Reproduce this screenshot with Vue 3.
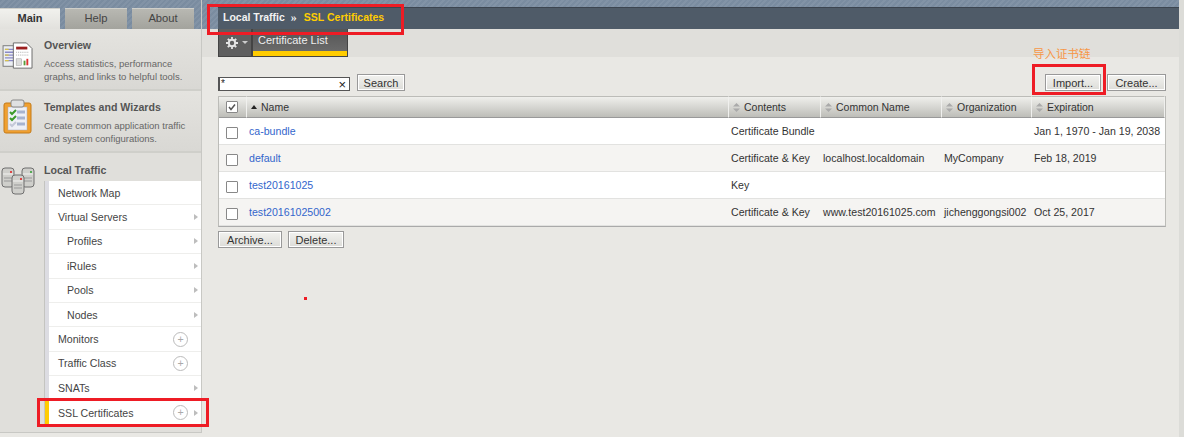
<template>
  <div class="page">
    <aside class="sidebar">
      <div class="tabs">
        <div v-for="t in tabs" :key="t" class="tab" :class="{ active: t === 'Main' }">{{ t }}</div>
      </div>

      <section class="side-block">
        <svg class="side-icon overview-icon" viewBox="0 0 34 30" width="32" height="28">
          <rect x="1" y="4" width="16" height="22" fill="#eceff3" stroke="#777" />
          <path d="M3 8h12M3 11h12M3 14h12M3 17h12M3 20h12" stroke="#8a8ac8" stroke-width="1.4" />
          <path d="M3 8h4M3 14h4M3 20h4" stroke="#d6c24a" stroke-width="1.4" />
          <path d="M12 1h14l6 6v21H12z" fill="#fff" stroke="#666" />
          <rect x="15" y="5" width="12" height="3" fill="#9c2020" />
          <path d="M15 11h14M15 14h14" stroke="#aaa" stroke-dasharray="1 1" />
          <rect x="15" y="18" width="6" height="7" fill="#ddd" stroke="#999" stroke-width=".5" />
          <rect x="23" y="20" width="2" height="5" fill="#5a9c3a" />
          <rect x="26" y="18" width="2" height="7" fill="#d33" />
        </svg>
        <div>
          <h3>Overview</h3>
          <p>Access statistics, performance graphs, and links to helpful tools.</p>
        </div>
      </section>

      <section class="side-block">
        <svg class="side-icon wizard-icon" viewBox="0 0 30 36" width="30" height="36">
          <rect x="1" y="4" width="27" height="30" rx="2" fill="#f0a030" stroke="#c47a18" />
          <rect x="5" y="8" width="19" height="23" fill="#eef0f6" stroke="#aab" stroke-width=".5" />
          <rect x="8" y="1" width="13" height="7" rx="2" fill="#dfe0e2" stroke="#888" />
          <path d="M7 13l2 2 4-4M7 19l2 2 4-4" fill="none" stroke="#3a9a2a" stroke-width="2" />
          <path d="M7 25l2 2 4-4" fill="none" stroke="#c4c8d8" stroke-width="2" />
          <path d="M14 13h8M14 19h8M14 25h8" stroke="#a8b4d0" stroke-width="3" />
        </svg>
        <div>
          <h3>Templates and Wizards</h3>
          <p>Create common application traffic and system configurations.</p>
        </div>
      </section>

      <section class="traffic">
        <svg class="side-icon traffic-icon" viewBox="0 0 34 28" width="34" height="28">
          <g v-for="s in servers" :key="s.x" fill="#cfcfcb" stroke="#6f6f6f">
            <rect :x="s.x" :y="s.y" width="12" height="19" rx="3" />
            <path :d="`M${s.x + 1} ${s.y + 6}h10`" stroke="#f2f2f0" fill="none" />
            <path :d="`M${s.x + 2} ${s.y + 10}h8M${s.x + 2} ${s.y + 13}h8`" stroke="#999" fill="none" />
            <rect :x="s.x + 8" :y="s.y + 3" width="2" height="2" :fill="s.led" stroke="none" />
          </g>
        </svg>
        <h3>Local Traffic</h3>
        <ul class="nav">
          <li v-for="item in nav" :key="item.label" :class="{ sub: item.sub, current: item.current }">
            <span class="nav-label">{{ item.label }}</span>
            <span v-if="item.plus" class="plus">+</span>
            <span v-if="item.arrow" class="arrow"></span>
          </li>
        </ul>
      </section>
    </aside>

    <main class="main">
      <div class="top-band">
        <div class="crumbs">
          <span>Local Traffic</span>
          <span class="sep">»</span>
          <span class="crumb-current">SSL Certificates</span>
        </div>
      </div>

      <div class="toolbar">
        <div class="gear-box">
          <svg viewBox="0 0 12 12" width="12" height="12">
            <circle cx="6" cy="6" r="3.2" fill="none" stroke="#e4e4e4" stroke-width="2" />
            <path d="M6 0v2.4M6 9.6V12M0 6h2.4M9.6 6H12M1.8 1.8l1.7 1.7M8.5 8.5l1.7 1.7M10.2 1.8L8.5 3.5M3.5 8.5l-1.7 1.7" stroke="#e4e4e4" stroke-width="1.8" />
          </svg>
          <span class="caret"></span>
        </div>
        <div class="list-tab">Certificate List</div>
      </div>

      <div class="content">
        <div class="action-row">
          <div class="search-box">
            <span class="search-value">*</span>
            <span class="clear">×</span>
          </div>
          <button class="btn search-btn">Search</button>
          <div class="spacer"></div>
          <button class="btn import-btn">Import...</button>
          <button class="btn create-btn">Create...</button>
        </div>

        <table class="cert-table">
          <colgroup>
            <col class="c-check" /><col class="c-name" /><col class="c-contents" />
            <col class="c-common" /><col class="c-org" /><col class="c-exp" />
          </colgroup>
          <thead>
            <tr>
              <th><span class="box head-box"><svg viewBox="0 0 10 10" width="10" height="10"><path d="M2 5l2 2.5L8 2.5" fill="none" stroke="#555" stroke-width="1.5" /></svg></span></th>
              <th><span class="sort-up"></span>Name</th>
              <th v-for="h in sortable" :key="h">
                <svg class="sort-both" viewBox="0 0 7 9" width="7" height="9"><path d="M3.5 0L7 3.5H0zM3.5 9L0 5.5h7z" fill="#aaa" /></svg>{{ h }}
              </th>
            </tr>
          </thead>
          <tbody>
            <tr v-for="r in rows" :key="r.name">
              <td><span class="box"></span></td>
              <td class="link">{{ r.name }}</td>
              <td>{{ r.contents }}</td>
              <td>{{ r.common }}</td>
              <td>{{ r.org }}</td>
              <td>{{ r.exp }}</td>
            </tr>
          </tbody>
        </table>

        <div class="bottom-row">
          <button class="btn archive-btn">Archive...</button>
          <button class="btn delete-btn">Delete...</button>
        </div>
      </div>
    </main>
    <div class="edge"></div>

    <!-- annotations drawn over the screenshot -->
    <div class="mark mark-crumb"></div>
    <div class="mark mark-import"></div>
    <div class="mark mark-ssl"></div>
    <div class="note">导入证书链</div>
    <div class="dot"></div>
  </div>
</template>

<script setup>
const tabs = ['Main', 'Help', 'About']

const servers = [
  { x: 1, y: 1, led: '#d44' },
  { x: 21, y: 1, led: '#5a5' },
  { x: 11, y: 8, led: '#d44' }
]

const nav = [
  { label: 'Network Map' },
  { label: 'Virtual Servers', arrow: true },
  { label: 'Profiles', sub: true, arrow: true },
  { label: 'iRules', sub: true, arrow: true },
  { label: 'Pools', sub: true, arrow: true },
  { label: 'Nodes', sub: true, arrow: true },
  { label: 'Monitors', plus: true },
  { label: 'Traffic Class', plus: true },
  { label: 'SNATs', arrow: true },
  { label: 'SSL Certificates', plus: true, arrow: true, current: true }
]

const sortable = ['Contents', 'Common Name', 'Organization', 'Expiration']

const rows = [
  { name: 'ca-bundle', contents: 'Certificate Bundle', common: '', org: '', exp: 'Jan 1, 1970 - Jan 19, 2038' },
  { name: 'default', contents: 'Certificate & Key', common: 'localhost.localdomain', org: 'MyCompany', exp: 'Feb 18, 2019' },
  { name: 'test20161025', contents: 'Key', common: '', org: '', exp: '' },
  { name: 'test20161025002', contents: 'Certificate & Key', common: 'www.test20161025.com', org: 'jichenggongsi002', exp: 'Oct 25, 2017' }
]
</script>

<style>
html, body {
  margin: 0;
  background: #e9e8e4;
  overflow: hidden;
}
</style>

<style scoped>
.page {
  position: relative;
  display: flex;
  width: 1184px;
  height: 437px;
  overflow: hidden;
  font-family: "Liberation Sans", Arial, sans-serif;
  font-size: 11px;
  color: #333;
  background: #e9e8e4;
}

.sidebar {
  width: 201px;
  height: 432px;
  flex: none;
  background: #e0dfdb;
  border-right: 1px solid #c8c8c4;
  border-bottom: 1px solid #c8c8c4;
}

.tabs {
  display: flex;
  gap: 5px;
  height: 21px;
  padding-top: 8px;
  background: repeating-linear-gradient(135deg, #7a8ca0 0 2px, #8293a6 2px 4px);
}

.tab {
  width: 62px;
  text-align: center;
  line-height: 20px;
  font-size: 11.2px;
  color: #444;
  background: linear-gradient(#b9b9b3, #a3a39d);
  box-shadow: inset 0 1px 0 #cfcfca;
}

.tab.active {
  width: 60px;
  font-size: 11px;
  font-weight: bold;
  color: #333;
  background: linear-gradient(#f2f2ee, #e2e1dd);
}

.side-block {
  display: flex;
  gap: 10px;
  height: 62px;
  box-sizing: border-box;
  padding: 10px 0 0 2px;
  border-bottom: 2px solid #cfcfca;
  background: linear-gradient(#e4e3df, #d9d8d4);
}

.side-block h3,
.traffic h3 {
  margin: 0;
  font-size: 10.6px;
  color: #555;
}

.side-block p {
  margin: 6px 0 0;
  width: 150px;
  line-height: 13px;
  font-size: 9.5px;
  color: #666;
}

.side-icon {
  flex: none;
}

.overview-icon {
  margin-top: 3px;
}

.wizard-icon {
  width: 30px;
  margin: -2px 1px 0 1px;
}

.traffic {
  position: relative;
  height: 279px;
  padding: 11px 0 0 44px;
  box-sizing: border-box;
}

.traffic-icon {
  position: absolute;
  left: 1px;
  top: 14px;
}

.nav {
  list-style: none;
  margin: 5px 0 0 1px;
  padding: 0;
  background: #fff;
  border-left: 4px solid #dcdce2;
  box-shadow: -1px 0 0 #c4c4c0;
}

.nav li {
  display: flex;
  align-items: center;
  height: 24.4px;
  box-sizing: border-box;
  padding-left: 9px;
  border-bottom: 1px solid #eeeeec;
  font-size: 10.6px;
  color: #444;
}

.nav li.sub {
  padding-left: 18px;
}

.nav li.current {
  border-bottom: 0;
  border-left: 4px solid #ffcc00;
  margin-left: -4px;
}

.nav-label {
  flex: 1;
}

.plus {
  width: 13px;
  height: 13px;
  margin-right: 13px;
  border: 1px solid #bbb;
  border-radius: 50%;
  line-height: 12px;
  text-align: center;
  color: #aaa;
}

.plus + .arrow {
  margin-left: -7px;
}

.arrow {
  width: 0;
  height: 0;
  margin-right: 3px;
  border-left: 4px solid #bdbdbd;
  border-top: 3.5px solid transparent;
  border-bottom: 3.5px solid transparent;
}

.main {
  flex: none;
  width: 977px;
}

.top-band {
  height: 22px;
  padding: 7px 0 0 16px;
  background: repeating-linear-gradient(135deg, #7a8ca0 0 2px, #8293a6 2px 4px);
}

.crumbs {
  display: flex;
  align-items: center;
  height: 18px;
  padding: 0 0 3px 5px;
  border-top: 1px solid #3c4550;
  background: #4f5b68;
  font-size: 10.5px;
  font-weight: bold;
  color: #f2f2f2;
}

.sep {
  margin: 0 7px 0 6px;
  font-size: 12px;
  font-family: "Liberation Serif", serif;
}

.crumb-current {
  color: #ffcc00;
}

.toolbar {
  display: flex;
  height: 28px;
  padding-left: 16px;
  background: #e0dfdb;
}

.gear-box {
  display: flex;
  align-items: center;
  gap: 4px;
  width: 34px;
  box-sizing: border-box;
  padding-left: 7px;
  background: #5f5f5f;
  border: 1px solid #444;
  border-top: 0;
}

.caret {
  border-top: 3px solid #ccc;
  border-left: 3px solid transparent;
  border-right: 3px solid transparent;
}

.list-tab {
  width: 96px;
  box-sizing: border-box;
  padding: 5px 0 0 5px;
  border: 1px solid #444;
  border-top: 0;
  background: linear-gradient(#555 0, #6a6a6a 22px, #ffcc00 22px, #ffcc00 26px);
  color: #eee;
  font-size: 11px;
}

.content {
  padding: 18px 13px 0 16px;
}

.action-row {
  display: flex;
  align-items: flex-end;
  height: 16px;
}

.search-box {
  display: flex;
  justify-content: space-between;
  width: 132px;
  height: 14px;
  box-sizing: border-box;
  padding: 0 3px 0 1px;
  background: #fff;
  border: 1px solid #555;
  border-left-width: 2px;
  line-height: 11px;
  font-size: 10px;
  color: #222;
}

.clear {
  font-size: 13px;
  line-height: 13px;
}

.btn {
  height: 17px;
  box-sizing: border-box;
  padding: 0;
  font-family: inherit;
  font-size: 11px;
  line-height: 12px;
  color: #333;
  background: linear-gradient(#f2f2ef, #dcdcd8);
  border: 1px solid #999;
  box-shadow: inset 0 0 0 1px #fff;
}

.search-btn {
  width: 48px;
  margin-left: 7px;
}

.spacer {
  flex: 1;
}

.import-btn {
  width: 56px;
}

.create-btn {
  width: 59px;
  margin-left: 6px;
}

.cert-table {
  width: 948px;
  margin-top: 5px;
  table-layout: fixed;
  border-collapse: separate;
  border-spacing: 0;
  border-right: 1px solid #bcbcb8;
  border-left: 1px solid #bcbcb8;
  border-bottom: 1px solid #aaa;
}

.c-check { width: 28px; }
.c-name { width: 482px; }
.c-contents { width: 92px; }
.c-common { width: 121px; }
.c-org { width: 90px; }

.cert-table th {
  height: 22px;
  box-sizing: border-box;
  padding: 0 0 0 4px;
  text-align: left;
  font-weight: normal;
  font-size: 10.5px;
  color: #333;
  background: linear-gradient(#efefec, #bdbdb8);
  border-top: 1px solid #bcbcb8;
  border-right: 1px solid #f0f0ee;
  border-bottom: 1px solid #999;
}

.cert-table td {
  height: 27px;
  box-sizing: border-box;
  padding: 0 0 1px 2px;
  font-size: 10.6px;
  color: #333;
  background: #fff;
  border-bottom: 1px solid #e2e2e0;
  white-space: nowrap;
}

.cert-table tbody tr:nth-child(even) td {
  background: #f5f4f2;
}

.cert-table td:first-child {
  padding: 3px 0 0 7px;
}

.cert-table td.link {
  color: #3366cc;
}

.box {
  display: block;
  width: 12px;
  height: 12px;
  box-sizing: border-box;
  background: #fff;
  border: 1px solid #888;
  border-radius: 1px;
}

.head-box {
  display: flex;
  align-items: center;
  justify-content: center;
  margin-left: 3px;
}

.sort-up {
  display: inline-block;
  margin: 0 4px 2px 0;
  border-bottom: 4px solid #222;
  border-left: 3.5px solid transparent;
  border-right: 3.5px solid transparent;
}

.sort-both {
  margin-right: 4px;
  vertical-align: -1px;
}

.bottom-row {
  display: flex;
  gap: 6px;
  margin-top: 4px;
}

.archive-btn {
  width: 64px;
}

.delete-btn {
  width: 56px;
}

.edge {
  flex: 1;
  background: #dcdcd8;
}

.mark {
  position: absolute;
  box-sizing: border-box;
  border: 3px solid #ee1c25;
}

.mark-crumb {
  left: 207px;
  top: 4px;
  width: 197px;
  height: 31px;
}

.mark-import {
  left: 1032px;
  top: 64px;
  width: 74px;
  height: 31px;
}

.mark-ssl {
  left: 37px;
  top: 398px;
  width: 172px;
  height: 29px;
}

.note {
  position: absolute;
  left: 1033px;
  top: 46px;
  font-family: "Noto Sans CJK SC", sans-serif;
  font-size: 11.5px;
  line-height: 14px;
  color: #f79646;
}

.dot {
  position: absolute;
  left: 304px;
  top: 297px;
  width: 3px;
  height: 3px;
  background: #ee1c25;
}
</style>
